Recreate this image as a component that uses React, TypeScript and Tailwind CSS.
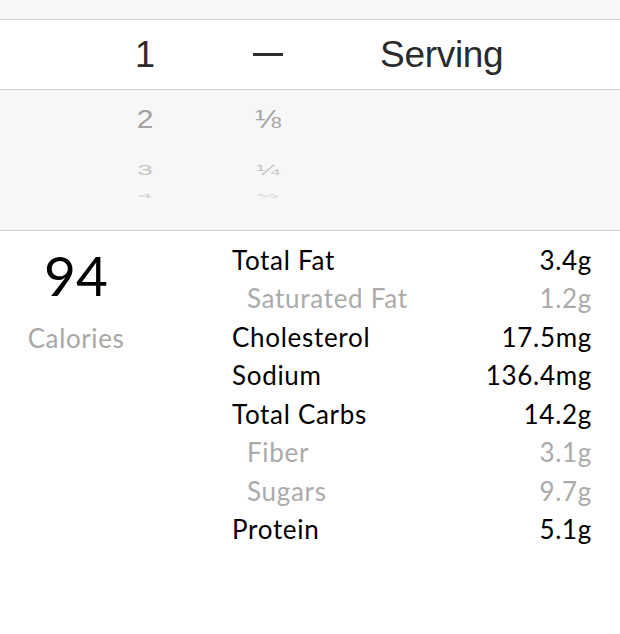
import React from 'react';

type Nutrient = {
  label: string;
  value: string;
  sub?: boolean;
};

const nutrients: Nutrient[] = [
  { label: 'Total Fat', value: '3.4g' },
  { label: 'Saturated Fat', value: '1.2g', sub: true },
  { label: 'Cholesterol', value: '17.5mg' },
  { label: 'Sodium', value: '136.4mg' },
  { label: 'Total Carbs', value: '14.2g' },
  { label: 'Fiber', value: '3.1g', sub: true },
  { label: 'Sugars', value: '9.7g', sub: true },
  { label: 'Protein', value: '5.1g' },
];

const pickerFont = { fontFamily: '"Liberation Sans", Arial, sans-serif' };
const bodyFont = { fontFamily: 'Lato, "Open Sans", sans-serif' };

const App: React.FC = () => {
  return (
    <div className="w-[620px] h-[634px] bg-white overflow-hidden" style={bodyFont}>
      {/* top strip */}
      <div className="h-[20px] bg-[#f7f7f7] border-b border-[#cfcfcf]" />

      {/* selected picker row */}
      <div className="h-[70px] bg-white border-b border-[#cfcfcf] flex items-center text-[#2b2b2b]" style={pickerFont}>
        <div className="w-[95px]" />
        <div className="w-[100px] text-center text-[36px]">1</div>
        <div className="ml-[23px] w-[100px] flex justify-center">
          <div className="w-[30px] h-[3px] bg-[#2b2b2b]" />
        </div>
        <div className="ml-[62px] text-[37px] tracking-[-0.3px]">Serving</div>
      </div>

      {/* wheel below */}
      <div className="h-[141px] bg-[#f7f7f7] border-b border-[#cfcfcf] flex flex-col overflow-hidden" style={pickerFont}>
        <div className="mt-[9px] h-[40px] flex items-center text-[#a3a3a3]">
          <div className="w-[95px]" />
          <div className="w-[100px] text-center text-[30px] scale-y-[0.85]">2</div>
          <div className="ml-[23px] w-[100px] text-center text-[31px] scale-y-[0.85]">⅛</div>
        </div>
        <div className="mt-[16px] h-[30px] flex items-center text-[#c4c4c4]">
          <div className="w-[95px]" />
          <div className="w-[100px] text-center text-[28px] scale-y-[0.5]">3</div>
          <div className="ml-[23px] w-[100px] text-center text-[28px] scale-y-[0.5]">¼</div>
        </div>
        <div className="mt-[1px] h-[20px] flex items-center text-[#d2d2d2]">
          <div className="w-[95px]" />
          <div className="w-[100px] text-center text-[26px] scale-y-[0.2]">4</div>
          <div className="ml-[23px] w-[100px] text-center text-[26px] scale-y-[0.2]">½</div>
        </div>
      </div>

      {/* nutrition */}
      <div className="flex pt-[10px]">
        <div className="w-[152px] flex flex-col items-center">
          <div className="text-[55px] leading-[60px] text-black mt-[4px]">94</div>
          <div className="text-[26px] leading-[30px] tracking-[0.6px] text-[#a8a8a8] mt-[18px]">Calories</div>
        </div>
        <div className="ml-[80px] flex-1 pr-[28px] flex flex-col">
          {nutrients.map((n) => (
            <div
              key={n.label}
              className={`h-[38.5px] flex items-center justify-between text-[26px] tracking-[0.7px] ${n.sub ? 'text-[#ababab]' : 'text-black'}`}
            >
              <span className={n.sub ? 'pl-[15px]' : ''}>{n.label}</span>
              <span>{n.value}</span>
            </div>
          ))}
        </div>
      </div>
    </div>
  );
};

export default App;
